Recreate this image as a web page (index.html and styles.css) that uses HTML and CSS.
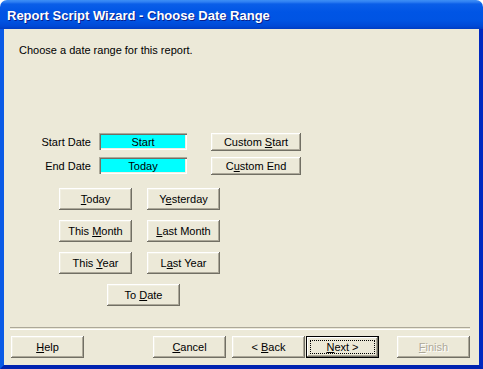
FILE: index.html
```html
<!DOCTYPE html>
<html lang="en">
<head>
  <meta charset="UTF-8" />
  <title>Report Script Wizard - Choose Date Range</title>
  <link rel="stylesheet" href="styles.css">
</head>
<body>

  <div class="window">
    <div class="titlebar">
      <span class="title">Report Script Wizard - Choose Date Range</span>
    </div>

    <div class="client">
      <p class="intro">Choose a date range for this report.</p>

      <div class="dates">
        <div class="date-row">
          <span class="date-label">Start Date</span>
          <div class="date-field">Start</div>
          <button class="btn btn-custom">Custom <u>S</u>tart</button>
        </div>
        <div class="date-row">
          <span class="date-label">End Date</span>
          <div class="date-field">Today</div>
          <button class="btn btn-custom">C<u>u</u>stom End</button>
        </div>
      </div>

      <div class="quick">
        <button class="btn"><u>T</u>oday</button>
        <button class="btn">Y<u>e</u>sterday</button>
        <button class="btn">This <u>M</u>onth</button>
        <button class="btn"><u>L</u>ast Month</button>
        <button class="btn">This <u>Y</u>ear</button>
        <button class="btn">L<u>a</u>st Year</button>
        <button class="btn to-date">To <u>D</u>ate</button>
      </div>

      <div class="footer">
        <div class="separator"></div>
        <div class="actions">
          <button class="btn"><u>H</u>elp</button>
          <div class="grow"></div>
          <button class="btn"><u>C</u>ancel</button>
          <button class="btn btn-back">&lt; <u>B</u>ack</button>
          <button class="btn btn-default"><span class="focus"><u>N</u>ext &gt;</span></button>
          <button class="btn btn-finish" disabled><u>F</u>inish</button>
        </div>
      </div>
    </div>
  </div>

</body>
</html>
```

FILE: styles.css
```css
html, body { margin: 0; padding: 0; background: #fff; }
body { font-family: 'Liberation Sans', Arial, sans-serif; font-size: 11px; color: #000; }

.window {
  width: 483px; height: 369px;
  display: flex; flex-direction: column;
}

.titlebar {
  height: 29px; flex: none;
  border-radius: 7px 7px 0 0;
  background: linear-gradient(to bottom, #3d8ff5 0, #2d7ef2 2px, #0a5ee8 4px, #0055e5 12px, #0054e3 70%, #0049d6 90%, #003cc2 100%);
  display: flex; align-items: center;
  padding-left: 7px; padding-top: 2px; box-sizing: border-box;
}
.title {
  color: #fff; font-weight: 700; font-size: 13px;
  text-shadow: 1px 1px #0a1e8a;
}

.client {
  flex: 1;
  background: #ece9d8;
  border-left: 4px solid #0a5ae6;
  border-right: 4px solid #0028c0;
  border-bottom: 4px solid #0022b0;
  display: flex; flex-direction: column;
}

.intro { margin: 15px 0 0 15px; line-height: 13px; }

.dates { margin: 76px 0 0 15px; display: flex; flex-direction: column; gap: 7px; }
.date-row { display: flex; align-items: center; height: 17px; }
.date-label { width: 72px; text-align: right; }
.date-field {
  width: 88px; height: 17px; margin-left: 8px;
  background: #00ffff; text-align: center; line-height: 18px;
  box-shadow: inset 1px 1px #aca899, inset 2px 2px #716f64, inset -1px -1px #fff, inset -2px -2px #f1efe2;
}

.btn {
  font-family: inherit; font-size: 11px; color: #000;
  background: #ece9d8; border: none; padding: 0;
  width: 73px; height: 22px;
  box-shadow: inset -1px -1px #716f64, inset 1px 1px #fff, inset -2px -2px #aca899, inset 2px 2px #f1efe2;
}
.btn u { text-decoration-thickness: 1px; text-underline-offset: 1px; }
.btn-custom { width: 90px; height: 18px; margin-left: 24px; }

.quick {
  margin: 14px 0 0 55px;
  display: grid; grid-template-columns: 73px 73px;
  column-gap: 15px; row-gap: 10px;
}
.to-date { grid-column: 1 / 3; margin-left: 48px; }

.footer { margin-top: auto; padding: 0 9px 7px 6px; }
.separator { height: 1px; border-top: 1px solid #aca899; border-bottom: 1px solid #fff; margin-bottom: 6px; }
.actions { display: flex; padding-left: 1px; }
.grow { flex: 1; }
.btn-back { margin-left: 6px; }
.btn-default {
  margin-left: 1px;
  box-shadow: inset 0 0 0 1px #000, inset -2px -2px #716f64, inset 2px 2px #fff, inset -3px -3px #aca899;
  display: flex; padding: 4px;
}
.focus { flex: 1; border: 1px dotted #000; display: flex; align-items: center; justify-content: center; }
.btn-finish { margin-left: 18px; color: #aca899; text-shadow: 1px 1px #fff; }
```
